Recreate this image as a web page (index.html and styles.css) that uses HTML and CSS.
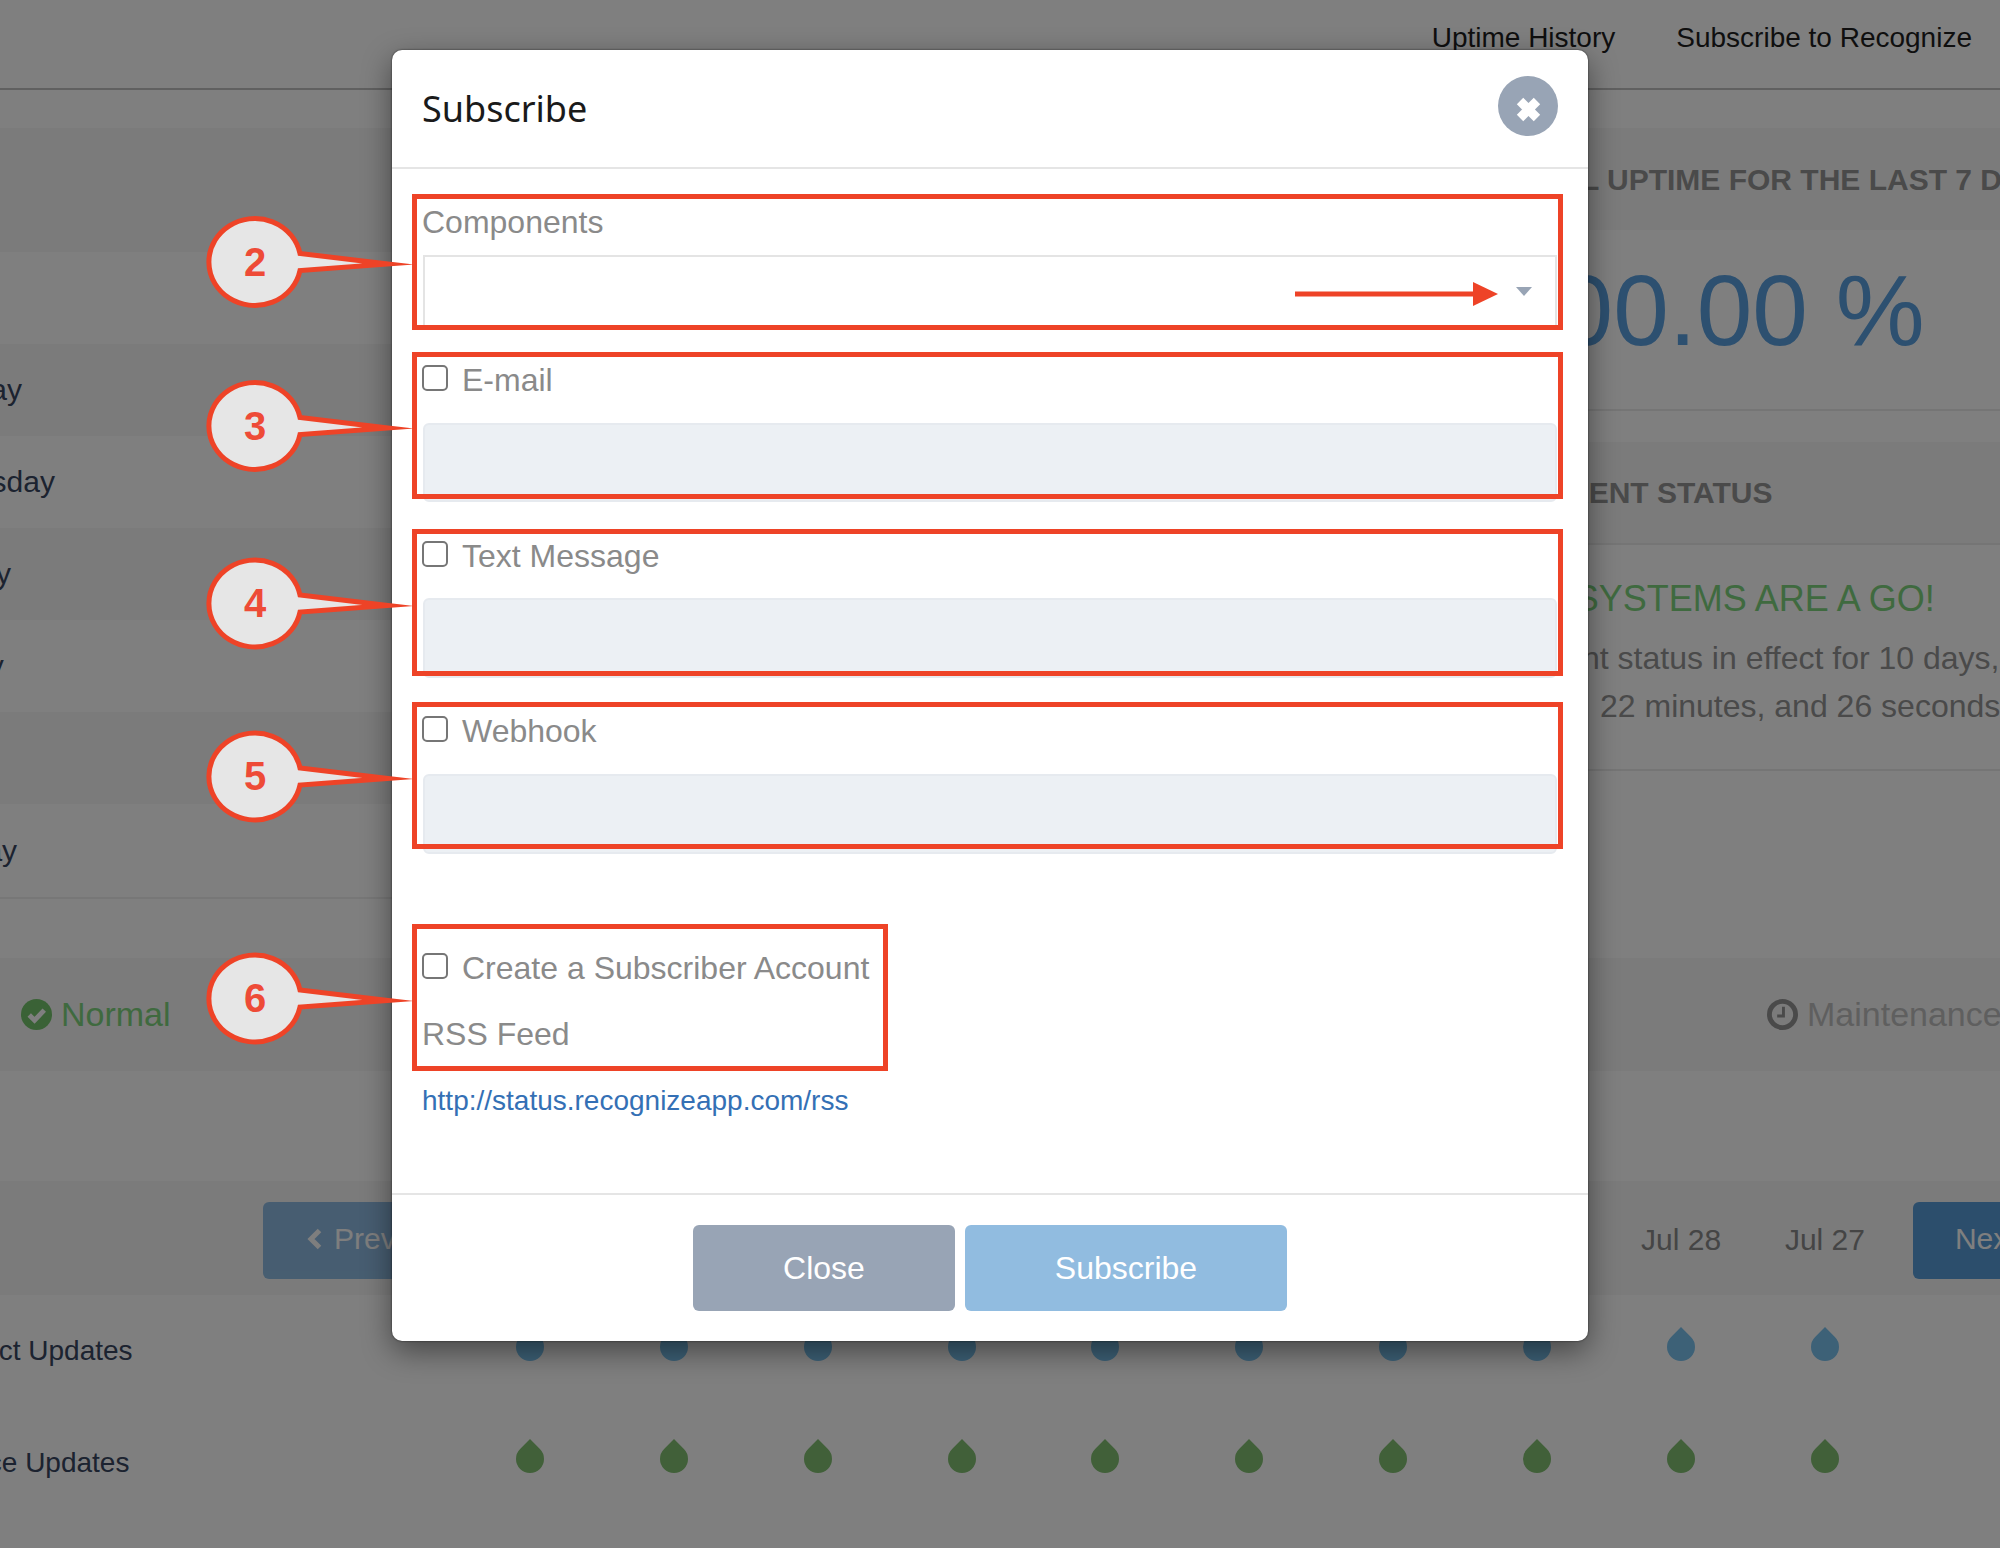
FILE: index.html
```html
<!DOCTYPE html>
<html lang="en">
<head>
<meta charset="utf-8">
<title>Subscribe</title>
<link rel="stylesheet" href="styles.css">
</head>
<body>
<svg class="defs" width="0" height="0" aria-hidden="true">
  <symbol id="drop" viewBox="0 0 28 34"><path d="M14 0 L23.9 10.1 A14 14 0 1 1 4.1 10.1 Z"/></symbol>
</svg>

<div class="page">
  <nav class="nav">
    <a class="nav-link">Uptime History</a>
    <a class="nav-link">Subscribe to Recognize</a>
  </nav>

  <main class="main">
    <section class="days">
      <div class="days-head"></div>
      <div class="day">Friday</div>
      <div class="day">Thursday</div>
      <div class="day">Wednesday</div>
      <div class="day">Tuesday</div>
      <div class="day">Monday</div>
      <div class="day">Sunday</div>
      <div class="day">Saturday</div>
    </section>
    <section class="side">
      <div class="side-head">TOTAL UPTIME FOR THE LAST 7 DAYS</div>
      <div class="uptime">100.00 %</div>
      <div class="side-head status-head">CURRENT STATUS</div>
      <div class="status-body">
        <div class="status-go">ALL SYSTEMS ARE A GO!</div>
        <div class="status-line">Current status in effect for 10 days,</div>
        <div class="status-line status-line-2">22 minutes, and 26 seconds</div>
      </div>
    </section>
  </main>

  <div class="legend">
    <div class="legend-item legend-normal">
      <svg class="legend-icon" viewBox="0 0 32 32"><circle cx="16" cy="16" r="16" fill="#74c46c"/><path d="M8.5 16.5 L14 22 L24 11.5" fill="none" stroke="#fff" stroke-width="5"/></svg>
      Normal
    </div>
    <div class="legend-item legend-maint">
      <svg class="legend-icon" viewBox="0 0 32 32"><circle cx="16" cy="16" r="13.5" fill="none" stroke="#949494" stroke-width="5"/><path d="M17 8 V17.5 H10.5" fill="none" stroke="#949494" stroke-width="3"/></svg>
      Maintenance
    </div>
  </div>

  <div class="dates">
    <a class="page-btn page-prev"><svg class="chev" viewBox="0 0 15 22"><path d="M12.5 2.5 L4 11 L12.5 19.5" fill="none" stroke="#fff" stroke-width="5"/></svg>Prev</a>
    <div class="date-cols">
      <span class="date">Aug 5</span><span class="date">Aug 4</span><span class="date">Aug 3</span><span class="date">Aug 2</span><span class="date">Aug 1</span><span class="date">Jul 31</span><span class="date">Jul 30</span><span class="date">Jul 29</span><span class="date">Jul 28</span><span class="date">Jul 27</span>
    </div>
    <a class="page-btn page-next">Next</a>
  </div>

  <div class="track">
    <div class="track-name">Product Updates</div>
    <div class="drops drops-blue">
      <svg class="drop"><use href="#drop"/></svg><svg class="drop"><use href="#drop"/></svg><svg class="drop"><use href="#drop"/></svg><svg class="drop"><use href="#drop"/></svg><svg class="drop"><use href="#drop"/></svg><svg class="drop"><use href="#drop"/></svg><svg class="drop"><use href="#drop"/></svg><svg class="drop"><use href="#drop"/></svg><svg class="drop"><use href="#drop"/></svg><svg class="drop"><use href="#drop"/></svg>
    </div>
  </div>
  <div class="track">
    <div class="track-name">Service Updates</div>
    <div class="drops drops-green">
      <svg class="drop"><use href="#drop"/></svg><svg class="drop"><use href="#drop"/></svg><svg class="drop"><use href="#drop"/></svg><svg class="drop"><use href="#drop"/></svg><svg class="drop"><use href="#drop"/></svg><svg class="drop"><use href="#drop"/></svg><svg class="drop"><use href="#drop"/></svg><svg class="drop"><use href="#drop"/></svg><svg class="drop"><use href="#drop"/></svg><svg class="drop"><use href="#drop"/></svg>
    </div>
  </div>
</div>

<div class="backdrop"></div>

<div class="modal">
  <header class="modal-head">
    <h1 class="modal-title">Subscribe</h1>
    <button class="modal-close" type="button" aria-label="Close">
      <svg class="close-x" viewBox="0 0 24 24"><path d="M5 5 L19 19 M19 5 L5 19" fill="none" stroke="#fff" stroke-width="7.5"/></svg>
    </button>
  </header>
  <div class="modal-body">
    <label class="field-title">Components</label>
    <div class="select"><span class="caret"></span></div>

    <label class="check check-email"><input class="box" type="checkbox"><span>E-mail</span></label>
    <div class="input input-email"></div>

    <label class="check check-text"><input class="box" type="checkbox"><span>Text Message</span></label>
    <div class="input"></div>

    <label class="check check-hook"><input class="box" type="checkbox"><span>Webhook</span></label>
    <div class="input"></div>

    <label class="check check-account"><input class="box" type="checkbox"><span>Create a Subscriber Account</span></label>
    <div class="field-title rss-title">RSS Feed</div>
    <a class="rss-link">http://status.recognizeapp.com/rss</a>
  </div>
  <footer class="modal-foot">
    <button class="btn btn-close" type="button">Close</button>
    <button class="btn btn-sub" type="button">Subscribe</button>
  </footer>
</div>

<div class="mark mark-2"></div>
<div class="mark mark-3"></div>
<div class="mark mark-4"></div>
<div class="mark mark-5"></div>
<div class="mark mark-6"></div>

<svg class="annot" viewBox="0 0 2000 1548">
  <defs>
    <path id="callout" d="M133 2.5 L45 -8 A46 43.5 0 1 0 45 9 Z"/>
  </defs>
  <g class="callout"><use href="#callout" x="255" y="261.5"/><text x="255" y="276">2</text></g>
  <g class="callout"><use href="#callout" x="255" y="425.5"/><text x="255" y="440">3</text></g>
  <g class="callout"><use href="#callout" x="255" y="603"/><text x="255" y="617">4</text></g>
  <g class="callout"><use href="#callout" x="255" y="776"/><text x="255" y="790">5</text></g>
  <g class="callout"><use href="#callout" x="255" y="998"/><text x="255" y="1012">6</text></g>
  <path class="arrow-line" d="M1295 294 H1475"/>
  <path class="arrow-head" d="M1473 282 L1498 294 L1473 306 Z"/>
</svg>
</body>
</html>
```

FILE: styles.css
```css
* { box-sizing: border-box; }

html, body {
  margin: 0;
  padding: 0;
  width: 2000px;
  height: 1548px;
  overflow: hidden;
  background: #fff;
}

body {
  position: relative;
  font-family: "Liberation Sans", Arial, sans-serif;
  font-size: 32px;
  color: #555;
}

.defs { position: absolute; }

.page {
  width: 2000px;
  height: 1548px;
  overflow: hidden;
  white-space: nowrap;
}

/* top nav */
.nav {
  height: 90px;
  border-bottom: 2px solid #c0c0c0;
  display: flex;
  justify-content: flex-end;
  gap: 61px;
  padding: 18px 28px 0 0;
  font-size: 28px;
  line-height: 40px;
  color: #1e1e1e;
  margin-bottom: 38px;
}

/* main two columns */
.main {
  display: grid;
  grid-template-columns: 1500px 500px;
  margin-bottom: 59px;
}

.days-head { height: 124px; background: #f7f7f7; }

.day {
  height: 92px;
  display: flex;
  align-items: center;
  text-indent: -103px;
  font-size: 30px;
  color: #384660;
}
.day:nth-child(odd) { background: #f7f7f7; }
.day:last-child { height: 95px; border-bottom: 2px solid #eee; }

.side-head {
  height: 102px;
  display: flex;
  align-items: center;
  padding: 1px 0 0 2px;
  background: #f7f7f7;
  font-size: 30px;
  font-weight: 700;
  color: #949494;
}

.uptime {
  height: 181px;
  border-bottom: 2px solid #eaeaea;
  display: flex;
  align-items: center;
  padding: 0 0 20px 2px;
  font-size: 100px;
  line-height: 1;
  color: #5aa0e0;
  margin-bottom: 31px;
}

.status-head { height: 103px; border-bottom: 2px solid #eaeaea; }

.status-body {
  height: 226px;
  padding: 32px 0 0 2px;
  border-bottom: 2px solid #eaeaea;
}

.status-go {
  font-size: 36px;
  line-height: 44px;
  color: #7ed47e;
  margin-bottom: 13px;
}

.status-line {
  font-size: 32px;
  line-height: 48px;
  color: #949494;
}
.status-line-2 { padding-left: 98px; }

/* legend band */
.legend {
  height: 113px;
  background: #f7f7f7;
  display: grid;
  grid-template-columns: 1746px 1fr;
  padding-left: 21px;
  align-items: center;
  margin-bottom: 110px;
  font-size: 34px;
}
.legend-item { display: flex; align-items: center; gap: 9px; }
.legend-normal { color: #7ed47e; }
.legend-maint { color: #bebebe; }
.legend-icon { width: 31px; height: 31px; flex: none; }

/* date band */
.dates {
  height: 114px;
  background: #f7f7f7;
  display: flex;
  align-items: flex-start;
  padding: 21px 0 0 263px;
  font-size: 30px;
}
.page-btn {
  height: 77px;
  border-radius: 6px;
  background: #589cd8;
  color: #fff;
  display: flex;
  align-items: center;
  padding-bottom: 3px;
  flex: none;
}
.page-prev { width: 195px; padding-left: 44px; gap: 12px; opacity: .65; }
.page-next { width: 120px; padding-left: 42px; margin-left: 16px; }
.chev { width: 15px; height: 22px; flex: none; }

.date-cols { display: flex; height: 77px; padding-bottom: 2px; align-items: center; }
.date {
  width: 143.9px;
  text-align: center;
  color: #8a8a8a;
}

/* drop rows */
.track {
  height: 112px;
  display: flex;
  align-items: center;
  padding-left: 458px;
}
.track-name {
  width: 0;
  margin-left: -534px;
  margin-right: 534px;
  font-size: 28px;
  color: #384660;
}
.drops { display: flex; margin-bottom: 14px; }
.drop { width: 28px; height: 34px; margin: 0 57.95px; display: block; }
.drops-blue { fill: #7ac2ee; }
.drops-green { fill: #82c072; }

/* backdrop and modal */
.backdrop {
  position: absolute;
  inset: 0;
  background: rgba(0, 0, 0, .5);
}

.modal {
  position: absolute;
  left: 392px;
  top: 50px;
  width: 1196px;
  height: 1291px;
  background: #fff;
  border-radius: 10px;
  box-shadow: 0 0 2px rgba(0, 0, 0, .7), 0 10px 30px rgba(0, 0, 0, .45);
  display: flex;
  flex-direction: column;
  white-space: nowrap;
}

.modal-head {
  height: 119px;
  flex: none;
  border-bottom: 2px solid #e5e5e5;
  display: flex;
  align-items: center;
  justify-content: space-between;
  padding: 0 30px;
}
.modal-title {
  margin: 0;
  font-family: "Noto Sans", sans-serif;
  font-size: 36px;
  font-weight: 400;
  color: #1a1a1a;
}
.modal-close {
  width: 60px;
  height: 60px;
  border: 0;
  padding: 7px 0 0;
  margin-top: -5px;
  border-radius: 50%;
  background: #98a4b5;
  display: flex;
  align-items: center;
  justify-content: center;
}
.close-x { width: 29px; height: 29px; display: block; }

.modal-body {
  flex: 1;
  padding: 33px 31px 0 30px;
  display: flex;
  flex-direction: column;
  align-items: stretch;
  color: #8a8a8a;
}

.field-title { display: block; height: 40px; line-height: 40px; font-size: 32px; color: #8a8a8a; }

.select {
  height: 73px;
  margin: 13px 0 37px 1px;
  border: 2px solid #e4e4e4;
  background: #fff;
  display: flex;
  justify-content: flex-end;
  padding: 30px 23px 0 0;
}
.caret {
  width: 0;
  height: 0;
  border-left: 8.5px solid transparent;
  border-right: 8.5px solid transparent;
  border-top: 9px solid #98a4b5;
}

.check {
  display: flex;
  align-items: flex-start;
  height: 30px;
  line-height: 30px;
  font-size: 32px;
  color: #8a8a8a;
  gap: 14px;
}
.box {
  appearance: none;
  width: 26px;
  height: 26px;
  margin: 0;
  border: 2px solid #767676;
  border-radius: 5px;
  background: #fff;
  flex: none;
}

.input {
  height: 80px;
  margin: 27px 0 38px 1px;
  background: #ecf0f4;
  border: 2px solid #e6eaef;
  border-radius: 6px;
}
.input-email { height: 79px; margin-top: 28px; margin-bottom: 39px; }
.check-hook + .input { margin-top: 28px; margin-bottom: 0; }

.check-account { margin-top: 99px; }
.rss-title { margin-top: 31px; }
.rss-link {
  margin-top: 27px;
  font-size: 28px;
  line-height: 40px;
  color: #3470b5;
}

.modal-foot {
  height: 148px;
  flex: none;
  border-top: 2px solid #e5e5e5;
  display: flex;
  justify-content: center;
  align-items: center;
  gap: 10px;
}
.btn {
  height: 86px;
  border: 0;
  border-radius: 6px;
  color: #fff;
  font-family: "Liberation Sans", Arial, sans-serif;
  font-size: 32px;
  padding: 0;
}
.btn-close { width: 262px; background: #98a4b5; }
.btn-sub { width: 322px; background: #91bce0; }

/* annotation layer */
.mark {
  position: absolute;
  left: 412px;
  width: 1151px;
  border: 5px solid #ee4327;
}
.mark-2 { top: 194px; height: 136px; }
.mark-3 { top: 352px; height: 147px; }
.mark-4 { top: 529px; height: 147px; }
.mark-5 { top: 702px; height: 147px; }
.mark-6 { top: 924px; height: 147px; width: 476px; }

.annot {
  position: absolute;
  left: 0;
  top: 0;
  width: 2000px;
  height: 1548px;
  pointer-events: none;
}
.callout use {
  fill: #e6e6e6;
  stroke: #ee4327;
  stroke-width: 5;
  stroke-miterlimit: 30;
}
.callout text {
  font-family: "Liberation Sans", Arial, sans-serif;
  font-size: 40px;
  font-weight: 700;
  fill: #ee4b37;
  text-anchor: middle;
}
.arrow-line { fill: none; stroke: #ee4327; stroke-width: 5; }
.arrow-head { fill: #ee4327; }
```
